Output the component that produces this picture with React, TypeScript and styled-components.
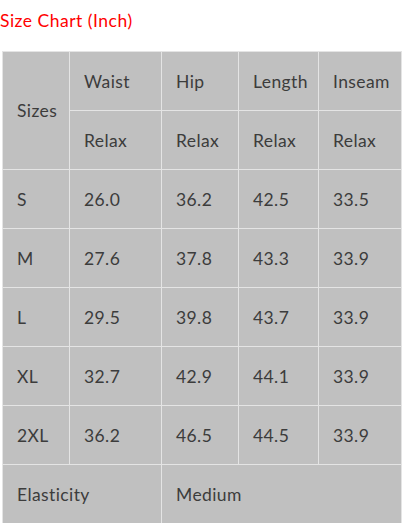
import React from "react";
import styled, { createGlobalStyle } from "styled-components";

const Global = createGlobalStyle`
  html, body { margin: 0; padding: 0; background: #fff; }
  body { font-family: "Century Gothic", Lato, "DejaVu Sans", sans-serif; }
`;

const Page = styled.div`
  width: 404px;
  display: flex;
  flex-direction: column;
`;

const Title = styled.div`
  height: 51px;
  box-sizing: border-box;
  padding-top: 11px;
  color: #ff0000;
  font-size: 17.5px;
  letter-spacing: 0.5px;
  line-height: 20px;
`;

const Table = styled.table`
  margin-left: 2px;
  width: 400px;
  border-collapse: collapse;
  table-layout: fixed;
  background: #c0c0c0;
  border: 1px solid #e4e4e4;
`;

const Cell = styled.td`
  height: 58px;
  padding: 0 0 0 14px;
  border: 1px solid #e4e4e4;
  color: #3c3c3c;
  font-size: 17.5px;
  letter-spacing: 0.4px;
  vertical-align: middle;
  white-space: nowrap;
  overflow: hidden;
`;

const widths = [67, 92, 77, 80, 83];

const rows = [
  ["S", "26.0", "36.2", "42.5", "33.5"],
  ["M", "27.6", "37.8", "43.3", "33.9"],
  ["L", "29.5", "39.8", "43.7", "33.9"],
  ["XL", "32.7", "42.9", "44.1", "33.9"],
  ["2XL", "36.2", "46.5", "44.5", "33.9"],
];

export default function App() {
  return (
    <Page>
      <Global />
      <Title>Size Chart (Inch)</Title>
      <Table>
        <colgroup>
          {widths.map((w, i) => (
            <col key={i} style={{ width: w }} />
          ))}
        </colgroup>
        <tbody>
          <tr>
            <Cell rowSpan={2}>Sizes</Cell>
            <Cell>Waist</Cell>
            <Cell>Hip</Cell>
            <Cell>Length</Cell>
            <Cell>Inseam</Cell>
          </tr>
          <tr>
            <Cell>Relax</Cell>
            <Cell>Relax</Cell>
            <Cell>Relax</Cell>
            <Cell>Relax</Cell>
          </tr>
          {rows.map((r) => (
            <tr key={r[0]}>
              {r.map((c, i) => (
                <Cell key={i}>{c}</Cell>
              ))}
            </tr>
          ))}
          <tr>
            <Cell colSpan={2}>Elasticity</Cell>
            <Cell colSpan={3}>Medium</Cell>
          </tr>
        </tbody>
      </Table>
    </Page>
  );
}
